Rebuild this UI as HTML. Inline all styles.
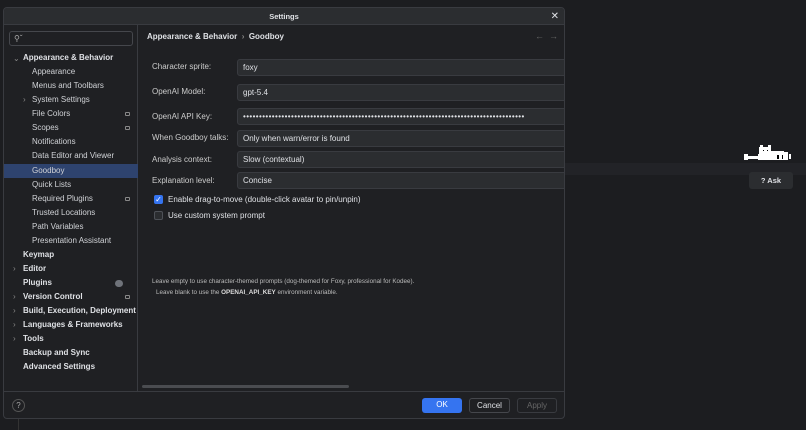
<!DOCTYPE html>
<html><head><style>
*{margin:0;padding:0;box-sizing:border-box}
body{width:806px;height:430px;background:#1c1d20;font-family:"Liberation Sans",sans-serif;color:#dfe1e5;font-size:8px;position:relative;overflow:hidden}
.dlg{position:absolute;left:3px;top:7px;width:562px;height:412px;background:#1f2023;border:1px solid #393b40;border-radius:4px;overflow:hidden}
.title{height:17px;background:#2b2d30;border-bottom:1px solid #393b40;text-align:center;font-size:7.5px;font-weight:bold;line-height:17px;position:relative}
.x{position:absolute;right:5px;top:0;font-size:10px;font-weight:normal}
.side{position:absolute;left:0;top:17px;width:134px;height:366px;border-right:1px solid #393b40}
.search{position:absolute;left:5px;top:6px;width:124px;height:15px;border:1px solid #45474c;border-radius:3px;font-size:8px;padding-left:4px;line-height:13px;color:#aaa}
.it{position:absolute;height:14px;line-height:14px;font-size:8px;white-space:nowrap;color:#d0d2d6}
.sel{background:#2e436e;left:0;width:134px}
.b{font-weight:bold;color:#dfe1e5}
.arr{position:absolute;color:#888;font-size:8px}
.pin{position:absolute;left:121px;width:5px;height:4px;border:1px solid #888;border-radius:1px}
.main{position:absolute;left:135px;top:17px;right:0;height:366px}
.lbl{position:absolute;left:13px;font-size:8px;color:#ccc}
.fld{position:absolute;left:98px;width:340px;height:17px;background:#2b2d30;border:1px solid #393b40;border-radius:3px;padding-left:5px;line-height:15px;font-size:8px}
.cb{position:absolute;left:15px;width:9px;height:9px;border-radius:2px}
.foot{position:absolute;left:0;top:383px;width:100%;height:29px;border-top:1px solid #393b40}
.btn{position:absolute;top:6px;height:15px;border-radius:3px;text-align:center;line-height:14px;font-size:8px}
</style></head><body>
<div style="position:absolute;left:565px;top:163px;width:241px;height:12px;background:#222327"></div>
<div style="position:absolute;left:18px;top:419px;width:1px;height:11px;background:#333"></div>
<svg style="position:absolute;left:744px;top:145px" width="50" height="20" viewBox="0 0 50 20">
<g fill="#fff"><rect x="0" y="9" width="4" height="6"/><rect x="3" y="11" width="14" height="3"/><rect x="14" y="9" width="4" height="6"/><rect x="15" y="2" width="12" height="10"/><rect x="16" y="0" width="3" height="3"/><rect x="24" y="0" width="3" height="3"/><rect x="18" y="7" width="26" height="8"/><rect x="26" y="6" width="14" height="3"/><rect x="45" y="9" width="2" height="5"/></g>
<g fill="#000"><rect x="19" y="5" width="1" height="1"/><rect x="23" y="5" width="1" height="1"/><rect x="33" y="10" width="2" height="4"/><rect x="38" y="10" width="1" height="4"/></g></svg>
<div style="position:absolute;left:749px;top:172px;width:44px;height:17px;background:#2b2d30;border-radius:3px;text-align:center;line-height:17px;font-size:7.5px;font-weight:bold">? Ask</div>
<div class="dlg">
<div class="title">Settings<span class="x">✕</span></div>
<div class="side">
<div class="search">⚲ˇ</div>
<span class="arr" style="left:9px;top:29px">⌄</span>
<div class="it b" style="left:19px;top:26px">Appearance &amp; Behavior</div>
<div class="it" style="left:28px;top:40px">Appearance</div>
<div class="it" style="left:28px;top:54px">Menus and Toolbars</div>
<span class="arr" style="left:19px;top:70px">›</span>
<div class="it" style="left:28px;top:68px">System Settings</div>
<div class="it" style="left:28px;top:82px">File Colors</div><div class="pin" style="top:87px"></div>
<div class="it" style="left:28px;top:96px">Scopes</div><div class="pin" style="top:101px"></div>
<div class="it" style="left:28px;top:110px">Notifications</div>
<div class="it" style="left:28px;top:124px">Data Editor and Viewer</div>
<div class="it sel" style="top:139px;padding-left:28px">Goodboy</div>
<div class="it" style="left:28px;top:153px">Quick Lists</div>
<div class="it" style="left:28px;top:167px">Required Plugins</div><div class="pin" style="top:172px"></div>
<div class="it" style="left:28px;top:181px">Trusted Locations</div>
<div class="it" style="left:28px;top:195px">Path Variables</div>
<div class="it" style="left:28px;top:209px">Presentation Assistant</div>
<div class="it b" style="left:19px;top:223px">Keymap</div>
<span class="arr" style="left:9px;top:239px">›</span><div class="it b" style="left:19px;top:237px">Editor</div>
<div class="it b" style="left:19px;top:251px">Plugins</div><div style="position:absolute;left:111px;top:255px;width:8px;height:7px;border-radius:4px;background:#6f737a"></div>
<span class="arr" style="left:9px;top:267px">›</span><div class="it b" style="left:19px;top:265px">Version Control</div><div class="pin" style="top:270px"></div>
<span class="arr" style="left:9px;top:281px">›</span><div class="it b" style="left:19px;top:279px">Build, Execution, Deployment</div>
<span class="arr" style="left:9px;top:295px">›</span><div class="it b" style="left:19px;top:293px">Languages &amp; Frameworks</div>
<span class="arr" style="left:9px;top:309px">›</span><div class="it b" style="left:19px;top:307px">Tools</div>
<div class="it b" style="left:19px;top:321px">Backup and Sync</div>
<div class="it b" style="left:19px;top:335px">Advanced Settings</div>
</div>
<div class="main">
<div style="position:absolute;left:8px;top:7px;font-size:8px;font-weight:bold">Appearance &amp; Behavior &nbsp;<span style="color:#888">›</span>&nbsp; Goodboy</div>
<div style="position:absolute;right:6px;top:6px;color:#666;font-size:9px">← &nbsp;→</div>
<div class="lbl" style="top:37px">Character sprite:</div><div class="fld" style="top:34px">foxy</div>
<div class="lbl" style="top:62px">OpenAI Model:</div><div class="fld" style="top:59px">gpt-5.4</div>
<div class="lbl" style="top:87px">OpenAI API Key:</div><div class="fld" style="top:83px;font-size:8px;letter-spacing:0.4px;overflow:hidden;white-space:nowrap">••••••••••••••••••••••••••••••••••••••••••••••••••••••••••••••••••••••••••••••••••••••••</div>
<div class="lbl" style="top:108px">When Goodboy talks:</div><div class="fld" style="top:105px">Only when warn/error is found</div>
<div class="lbl" style="top:130px">Analysis context:</div><div class="fld" style="top:126px">Slow (contextual)</div>
<div class="lbl" style="top:151px">Explanation level:</div><div class="fld" style="top:147px">Concise</div>
<div class="cb" style="top:170px;background:#3574f0;color:#fff;font-size:8px;line-height:9px;text-align:center">✓</div>
<div class="lbl" style="left:29px;top:170px;color:#dfe1e5">Enable drag-to-move (double-click avatar to pin/unpin)</div>
<div class="cb" style="top:186px;background:#2b2d30;border:1px solid #4e5157"></div>
<div class="lbl" style="left:29px;top:186px;color:#dfe1e5">Use custom system prompt</div>
<div style="position:absolute;left:13px;top:253px;font-size:6.3px;color:#bbb">Leave empty to use character-themed prompts (dog-themed for Foxy, professional for Kodee).</div>
<div style="position:absolute;left:17px;top:264px;font-size:6.3px;color:#bbb">Leave blank to use the <b style="color:#ddd">OPENAI_API_KEY</b> environment variable.</div>
<div style="position:absolute;left:3px;top:360px;width:207px;height:3px;border-radius:2px;background:#4a4c50"></div>
</div>
<div class="foot">
<div style="position:absolute;left:8px;top:7px;width:13px;height:13px;border:1px solid #555;border-radius:50%;text-align:center;line-height:11px;font-size:8px;color:#aaa">?</div>
<div class="btn" style="left:418px;width:40px;background:#3574f0;color:#fff">OK</div>
<div class="btn" style="left:465px;width:41px;border:1px solid #45474c">Cancel</div>
<div class="btn" style="left:513px;width:40px;border:1px solid #393b40;color:#666">Apply</div>
</div>
</div>
</body></html>
